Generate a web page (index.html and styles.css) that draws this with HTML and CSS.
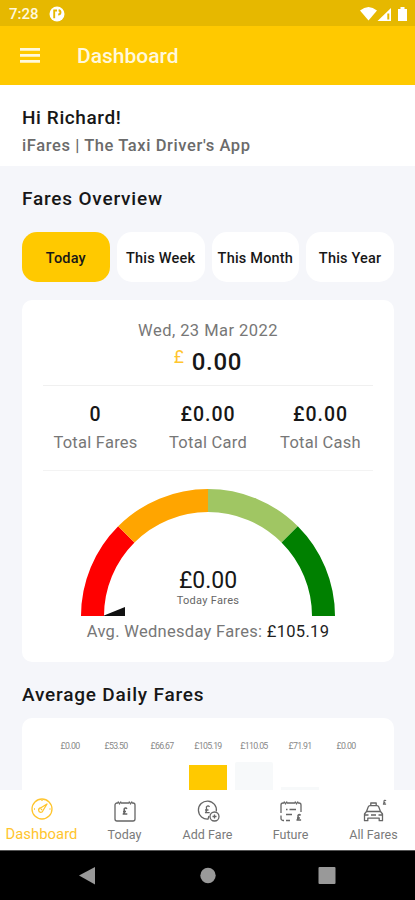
FILE: index.html
```html
<!DOCTYPE html>
<html lang="en">
<head>
<meta charset="utf-8">
<title>iFares Dashboard</title>
<link rel="stylesheet" href="styles.css">
</head>
<body>
<div class="phone">
  <div class="status">
    <span class="clock">7:28</span>
    <svg class="notif" width="16" height="16" viewBox="0 0 16 16"><circle cx="8" cy="8" r="7.5" fill="#fff"/><path d="M5.200 12.300V4.500H8M9.600 4.300c2.600.4 2.600 4.200-.4 4.200" fill="none" stroke="#e6b800" stroke-width="1.900"/></svg>
    <svg class="signals" width="48" height="16" viewBox="0 0 48 16" fill="#fff"><path d="M0 4.600Q8.500-2.500 17 4.600L8.500 14.500Z"/><path d="M17.500 15 31 2V15Z"/><path d="M27.300 7.500h2v6h-2z" fill="#e6b800"/><path d="M38 3h2.500V1h4v2H47v12h-9z"/></svg>
  </div>
  <header class="appbar">
    <svg width="20" height="15" viewBox="0 0 20 15" fill="#fff8dc"><path d="M0 0h20v2.700H0zM0 6h20v2.700H0zM0 12h20v2.700H0z"/></svg>
    <h1>Dashboard</h1>
  </header>
  <section class="greeting">
    <p class="hello">Hi Richard!</p>
    <p class="tagline">iFares | The Taxi Driver's App</p>
  </section>
  <main>
    <h2 class="overview">Fares Overview</h2>
    <div class="chips">
      <span class="chip active">Today</span><span class="chip">This Week</span><span class="chip">This Month</span><span class="chip">This Year</span>
    </div>
    <section class="card">
      <p class="date">Wed, 23 Mar 2022</p>
      <p class="total"><span class="pound">£</span><span>0.00</span></p>
      <div class="stats">
        <div><b>0</b><span>Total Fares</span></div>
        <div><b>£0.00</b><span>Total Card</span></div>
        <div><b>£0.00</b><span>Total Cash</span></div>
      </div>
      <div class="gauge">
        <svg width="254" height="127" viewBox="-127 -127 254 127" fill="none" stroke-width="23">
          <path stroke="#f00" d="M-115.500 0A115.500 115.500 0 0 1-81.670-81.670"/>
          <path stroke="#ffa500" d="M-81.670-81.670A115.500 115.500 0 0 1 0-115.500"/>
          <path stroke="#a0c663" d="M0-115.500A115.500 115.500 0 0 1 81.670-81.670"/>
          <path stroke="#008000" d="M81.670-81.670A115.500 115.500 0 0 1 115.500 0"/>
          <path d="M-104-.5-83-9V0h-21z" fill="#111" stroke="none"/>
        </svg>
        <div class="reading"><span class="value">£0.00</span><span class="caption">Today Fares</span></div>
      </div>
      <p class="avg">Avg. Wednesday Fares: <span>£105.19</span></p>
    </section>
    <h2 class="daily">Average Daily Fares</h2>
    <section class="chart">
      <div class="col"><span>£0.00</span></div>
      <div class="col"><span>£53.50</span></div>
      <div class="col"><span>£66.67</span></div>
      <div class="col"><span>£105.19</span><i class="bar gold"></i></div>
      <div class="col"><span>£110.05</span><i class="bar tall"></i></div>
      <div class="col"><span>£71.91</span><i class="bar short"></i></div>
      <div class="col"><span>£0.00</span></div>
    </section>
  </main>
  <nav class="tabs">
    <a class="tab selected"><svg width="24" height="24" viewBox="0 0 24 24"><circle cx="12" cy="12" r="10"/><path d="m17 7-4 6.500a2.200 2.200 0 1 1-2.500-2.500Z M12 12l-1 1M12 3v1M4 12h1M19.500 12h1"/></svg><span>Dashboard</span></a>
    <a class="tab"><svg width="24" height="24" viewBox="0 0 24 24"><path d="M5 4H4a2 2 0 0 0-2 2v14a2 2 0 0 0 2 2h16a2 2 0 0 0 2-2V6a2 2 0 0 0-2-2h-1M8 4h8M5 2.500 6.500 5 8 2.500M16 2.500 17.500 5 19 2.500"/><path class="mark" d="M13.800 10c-1-2-3.300-.8-2.500 1.500.4 1.500.2 2.500-1 3.500h4M10 12.500h3"/></svg><span>Today</span></a>
    <a class="tab"><svg width="24" height="24" viewBox="0 0 24 24"><path d="M12.500 20A9 9 0 1 1 20.300 12.500M13.500 8c-1.200-2-3.800-.8-3 1.500.5 1.800.2 3-1 4.200h4.200M9 11h3.500M13 17l-1 3"/><circle cx="18.500" cy="17.500" r="4.500"/><path d="M18.500 15.500v4M16.500 17.500h4"/></svg><span>Add Fare</span></a>
    <a class="tab"><svg width="24" height="24" viewBox="0 0 24 24"><path d="M11 21.500H7M5 21.500H4a2 2 0 0 1-2-2v-3M2 14V6a2 2 0 0 1 2-2h1M8 4h8M19 4h1a2 2 0 0 1 2 2v7M5 2.500 6.500 5 8 2.500M16 2.500 17.500 5 19 2.500M7 10.500h1.500M10.500 10.500H17M7 15.500h6"/><path class="mark" d="M21.500 16.500c-1-1.500-3-.7-2.400 1 .3 1.500 0 2.600-1 3.500h4M18 19h3"/></svg><span>Future</span></a>
    <a class="tab"><svg width="24" height="24" viewBox="0 0 24 24"><path d="M4.500 12.500 6.200 8a2 2 0 0 1 1.800-1.300h7A2 2 0 0 1 16.800 8l1.700 4.500M8.800 6.500V4h5.400v2.500M4.500 12.500h14l2 2.500v6.700h-3.300v-2.500H5.800v2.500H2.500V15ZM3 16h3.500M20 16h-3.500M9 16h5"/><path class="mark small" d="M24 1.800c-.8-1-2.300-.5-2 .7.200 1 0 1.800-.6 2.700h2.700M21.300 3.600h2"/></svg><span>All Fares</span></a>
  </nav>
  <footer class="system">
    <svg width="415" height="50" viewBox="0 0 415 50" fill="#999"><path d="M79 24.500 95 16v17.500Z"/><circle cx="208" cy="24.500" r="7.700"/><rect x="318.500" y="16" width="17" height="17" rx="1"/></svg>
  </footer>
</div>
</body>
</html>
```
FILE: styles.css
```css
* { box-sizing: border-box; margin: 0; padding: 0; }
body { font-family: Roboto, "Liberation Sans", sans-serif; color: #171717; }
.phone { width: 415px; height: 900px; display: flex; flex-direction: column; overflow: hidden; background: #f5f6fa; }
.status { height: 26px; flex: none; background: #e6b800; display: flex; align-items: center; padding: 1px 10px 0 9px; }
.clock { color: #fff8dc; font-size: 15px; font-weight: 500; width: 40px; }
.signals { margin-left: auto; margin-right: -3px; }
.appbar { height: 59px; flex: none; background: #ffc900; display: flex; align-items: center; padding: 0 20px 1px; gap: 37px; }
.appbar h1 { color: #fff8dc; font-size: 21px; font-weight: 500; line-height: 26px; padding-top: 2px; }
.greeting { height: 81px; flex: none; background: #fff; padding: 20px 22px 0; }
.hello { font-size: 19px; font-weight: 500; line-height: 26px; letter-spacing: .6px; }
.tagline { font-size: 16.500px; font-weight: 500; line-height: 29px; color: #6b6b6b; letter-spacing: .59px; }
main { flex: 1; min-height: 0; overflow: hidden; padding: 0 21px 0 22px; }
h2 { font-size: 19px; font-weight: 500; line-height: 26px; letter-spacing: .8px; }
.overview { margin-top: 20px; }
.chips { display: grid; grid-template-columns: repeat(4, 1fr); gap: 7px; margin-top: 20px; }
.chip { height: 50px; border-radius: 15px; background: #fff; display: flex; align-items: center; justify-content: center; font-size: 14.500px; font-weight: 500; white-space: nowrap; letter-spacing: .2px; padding-top: 2px; }
.chip.active { background: #ffc900; }
.card { height: 362px; margin-top: 18px; border-radius: 10px; background: #fff; padding: 18px 21px 0; text-align: center; }
.date { font-size: 16.500px; line-height: 26px; color: #777; letter-spacing: .45px; }
.total { display: flex; justify-content: center; gap: 7px; font-size: 24px; font-weight: 500; line-height: 37px; height: 40px; letter-spacing: .7px; }
.pound { color: #ffc52e; font-size: 17.500px; font-weight: 400; line-height: 27px; }
.stats { height: 86px; border-top: 1px solid #f0f0f0; border-bottom: 1px solid #f3f3f3; display: grid; grid-template-columns: repeat(3, 112.500px); justify-content: center; margin-top: 1px; padding: 15px 0 0; }
.stats div { display: flex; flex-direction: column; white-space: nowrap; }
.stats b { font-size: 19.500px; font-weight: 500; line-height: 28px; letter-spacing: 1px; }
.stats span { font-size: 16.500px; line-height: 28px; color: #777; letter-spacing: .25px; }
.gauge { display: grid; justify-items: center; margin-top: 18px; height: 127px; }
.gauge > * { grid-area: 1 / 1; }
.reading { display: flex; flex-direction: column; padding-top: 78px; }
.value { font-size: 23px; line-height: 27px; }
.caption { font-size: 11px; line-height: 14px; color: #666; letter-spacing: .3px; }
.avg { font-size: 16.500px; line-height: 24px; margin-top: 4px; color: #777; letter-spacing: .3px; white-space: nowrap; }
.avg span { color: #222; }
.daily { margin-top: 20px; }
.chart { height: 160px; margin-top: 10px; border-radius: 10px; background: #fff; padding: 22px 25px 0; display: grid; grid-template-columns: repeat(7, 46px); }
.col { display: flex; flex-direction: column; align-items: center; }
.col span { font-size: 8.800px; line-height: 12px; color: #888; letter-spacing: -.7px; }
.bar { width: 38px; height: 100px; background: #f7f9fa; }
.gold { background: #ffc900; margin-top: 13px; }
.tall { margin-top: 10px; border-radius: 2px 2px 0 0; }
.short { margin-top: 35px; }
.tabs { height: 60px; flex: none; background: #fff; display: grid; grid-template-columns: repeat(5, 83px); }
.tab { display: flex; flex-direction: column; align-items: center; padding-top: 9px; color: #666; white-space: nowrap; }
.tab svg { fill: none; stroke: currentColor; stroke-width: 1.300; stroke-linejoin: round; overflow: visible; }
.mark { stroke-width: 1.600; }
.small { stroke-width: 1.200; }
.tab span { font-size: 12.500px; line-height: 18px; margin-top: 3px; color: #7a7a7a; letter-spacing: .05px; }
.tab.selected { color: #ffc52e; padding-top: 7px; }
.tab.selected span { color: #ffc52e; font-size: 14.800px; margin-top: 4px; }
.system { height: 50px; flex: none; background: #000; border-top: 1px solid #555; }
.system svg { display: block; }
```
